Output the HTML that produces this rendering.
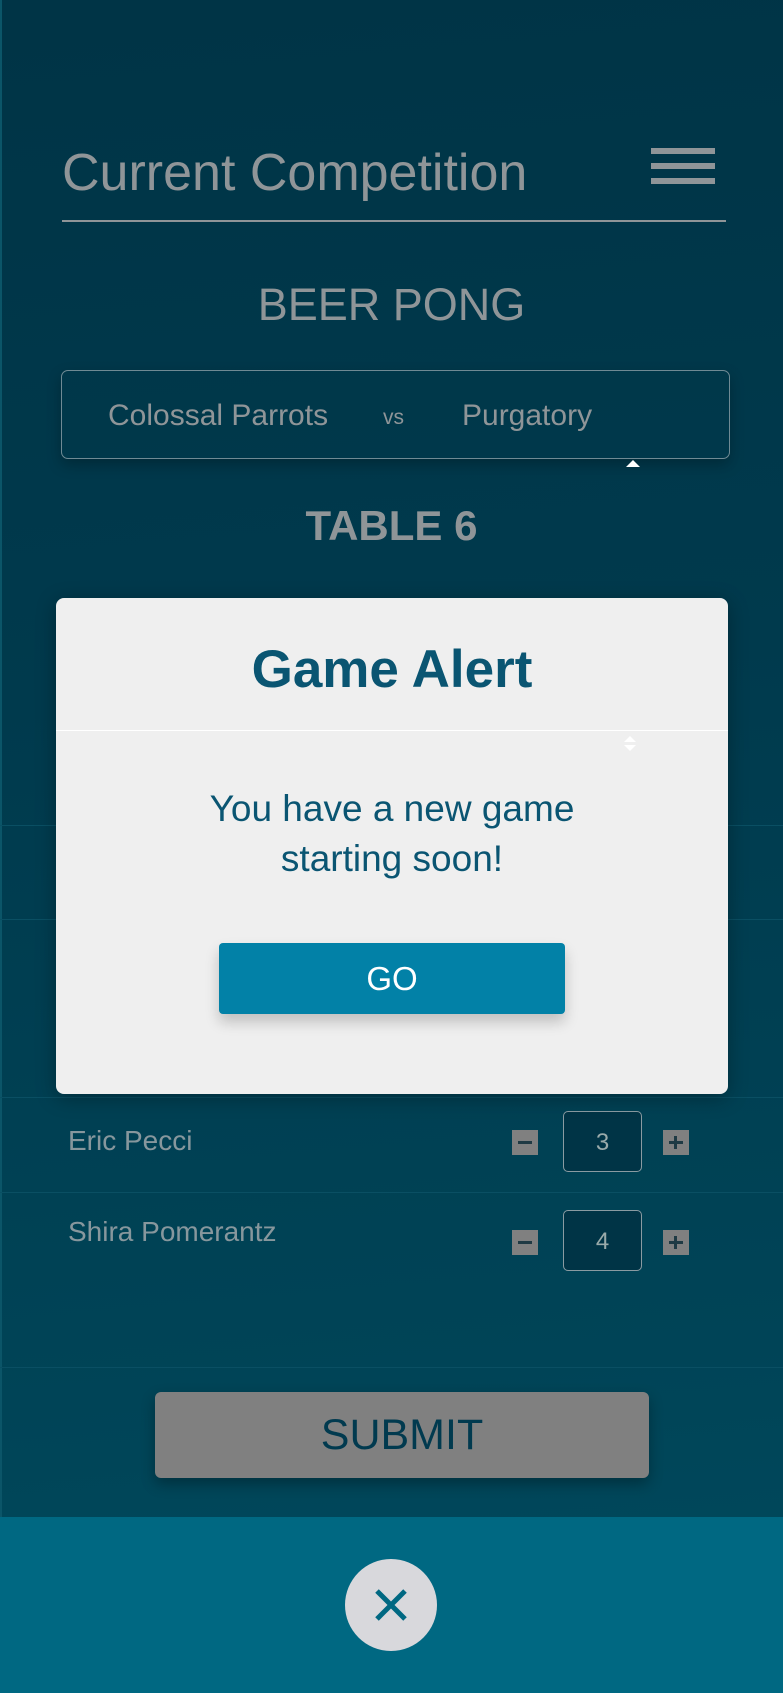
<!DOCTYPE html>
<html><head><meta charset="utf-8">
<style>
html,body{margin:0;padding:0;}
body{width:783px;height:1693px;position:relative;overflow:hidden;font-family:"Liberation Sans",sans-serif;
background:linear-gradient(175deg,#003446 0%,#003a4d 40%,#004457 80%,#004a5e 100%);}
.a{position:absolute;white-space:nowrap;}
.line{position:absolute;left:0;width:783px;height:1px;background:#0a4f63;}
.mb,.pb{position:absolute;width:26px;height:25px;background:#808080;}
.mb:after{content:"";position:absolute;left:6px;top:11px;width:14px;height:3px;background:#1f3a44;}
.pb:after{content:"";position:absolute;left:6px;top:11px;width:14px;height:3px;background:#1f3a44;}
.pb:before{content:"";position:absolute;left:11px;top:6px;width:3px;height:13px;background:#1f3a44;}
.inp{position:absolute;width:79px;height:61px;border:1px solid #8a9ba2;border-radius:5px;background:#003446;color:#9aa;font-size:24px;text-align:center;line-height:61px;box-sizing:border-box;}
</style></head><body>
<div style="position:absolute;left:0;top:0;width:2px;height:1693px;background:#0b5568"></div>
<div class="a" style="left:62px;top:142px;font-size:52px;color:#8f9598;line-height:62px;">Current Competition</div>
<div style="position:absolute;left:651px;top:148px;width:64px;height:6px;background:#8f9598"></div>
<div style="position:absolute;left:651px;top:163px;width:64px;height:6px;background:#8f9598"></div>
<div style="position:absolute;left:651px;top:178px;width:64px;height:6px;background:#8f9598"></div>
<div style="position:absolute;left:62px;top:220px;width:664px;height:2px;background:#8f9598"></div>
<div class="a" style="left:0;width:783px;text-align:center;top:278px;font-size:45px;color:#8f9598;line-height:54px;">BEER PONG</div>
<div style="position:absolute;left:61px;top:370px;width:669px;height:89px;border:1px solid #6f8a94;border-radius:7px;box-sizing:border-box;box-shadow:0 6px 14px rgba(0,0,0,.25)"></div>
<div class="a" style="left:108px;top:398px;font-size:30px;color:#8f9598;line-height:36px;">Colossal Parrots</div>
<div class="a" style="left:383px;top:405px;font-size:21px;color:#8f9598;line-height:26px;">vs</div>
<div class="a" style="left:462px;top:398px;font-size:30px;color:#8f9598;line-height:36px;">Purgatory</div>
<div style="position:absolute;left:626px;top:460px;width:0;height:0;border-left:7px solid transparent;border-right:7px solid transparent;border-bottom:7px solid #fff"></div>
<div class="a" style="left:0;width:783px;text-align:center;top:500px;font-size:42px;font-weight:bold;color:#8f9598;line-height:52px;">TABLE 6</div>

<div class="line" style="top:825px"></div>
<div class="line" style="top:919px"></div>
<div class="line" style="top:1097px"></div>
<div class="line" style="top:1192px"></div>
<div class="line" style="top:1367px"></div>

<div class="a" style="left:68px;top:1124px;font-size:28px;color:#87979d;line-height:34px;">Eric Pecci</div>
<div class="mb" style="left:512px;top:1130px"></div>
<div class="inp" style="left:563px;top:1111px">3</div>
<div class="pb" style="left:663px;top:1130px"></div>
<div class="a" style="left:68px;top:1215px;font-size:28px;color:#87979d;line-height:34px;">Shira Pomerantz</div>
<div class="mb" style="left:512px;top:1230px"></div>
<div class="inp" style="left:563px;top:1210px">4</div>
<div class="pb" style="left:663px;top:1230px"></div>

<div style="position:absolute;left:155px;top:1392px;width:494px;height:86px;background:#808080;border-radius:6px;box-shadow:0 6px 14px rgba(0,0,0,.3);color:#013a4f;font-size:43px;text-align:center;line-height:86px;">SUBMIT</div>

<div style="position:absolute;left:0;top:1517px;width:783px;height:176px;background:#006882"></div>
<div style="position:absolute;left:345px;top:1559px;width:92px;height:92px;border-radius:50%;background:#d8d8dc;"></div>
<svg style="position:absolute;left:371px;top:1585px" width="40" height="40" viewBox="0 0 40 40"><path d="M6 6L34 34M34 6L6 34" stroke="#006882" stroke-width="5"/></svg>

<div style="position:absolute;left:56px;top:598px;width:672px;height:496px;background:#efefef;border-radius:8px;box-shadow:0 4px 20px rgba(0,0,0,.3)">
<div class="a" style="left:0;width:672px;text-align:center;top:42px;font-size:53px;font-weight:bold;color:#0a5572;line-height:60px;">Game Alert</div>
<div style="position:absolute;left:0;top:132px;width:672px;height:1px;background:#fff"></div>
<div style="position:absolute;left:568px;top:138px;width:0;height:0;border-left:6px solid transparent;border-right:6px solid transparent;border-bottom:6px solid #fff"></div>
<div style="position:absolute;left:568px;top:147px;width:0;height:0;border-left:6px solid transparent;border-right:6px solid transparent;border-top:6px solid #fff"></div>
<div class="a" style="left:0;width:672px;text-align:center;top:186px;font-size:37px;color:#0a5572;line-height:50px;">You have a new game<br>starting soon!</div>
<div style="position:absolute;left:163px;top:345px;width:346px;height:71px;background:#0281a7;border-radius:4px;box-shadow:0 8px 14px rgba(0,0,0,.2);color:#fff;font-size:33px;text-align:center;line-height:71px;">GO</div>
</div>
</body></html>
